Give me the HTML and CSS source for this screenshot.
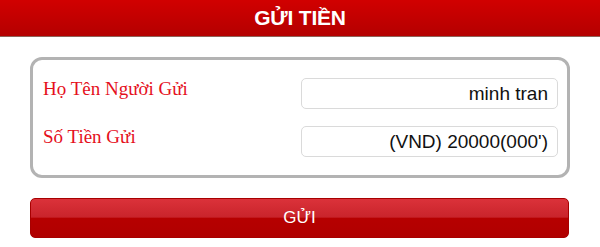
FILE: index.html
```html
<!DOCTYPE html>
<html lang="vi">
<head>
  <meta charset="UTF-8">
  <meta name="viewport" content="width=device-width, initial-scale=1.0">
  <title>Gửi Tiền</title>
  <link rel="stylesheet" href="styles.css">
</head>
<body>

  <div class="topbar">
    <h1>GỬI TIỀN</h1>
  </div>

  <form class="panel" id="sendForm">
    <div class="row">
      <label for="sender">Họ Tên Người Gửi</label>
      <input type="text" id="sender" value="minh tran">
    </div>
    <div class="row">
      <label for="amount">Số Tiền Gửi</label>
      <input type="text" id="amount" value="(VND) 20000(000')">
    </div>
  </form>

  <div class="actions">
    <button type="submit" form="sendForm" class="send-btn">GỬI</button>
  </div>

</body>
</html>
```

FILE: styles.css
```css
body {
  margin: 0;
  font-family: "Liberation Sans", Arial, sans-serif;
  background-color: #fff;
}
.topbar {
  height: 36px;
  display: flex;
  align-items: center;
  justify-content: center;
  background: linear-gradient(to bottom, #d10000, #b40000);
  border-bottom: 1px solid #8e6258;
}
.topbar h1 {
  margin: 0;
  color: #fff;
  font-size: 21px;
  font-weight: bold;
  letter-spacing: -0.2px;
}
.panel {
  margin: 20px 30px 0;
  padding: 18px 9px 18px 10px;
  border: 3px solid #b3b3b3;
  border-radius: 12px;
  display: flex;
  flex-direction: column;
  gap: 17px;
}
.row {
  display: flex;
  align-items: flex-start;
  justify-content: space-between;
}
.row label {
  font-family: "Liberation Serif", "Times New Roman", serif;
  font-size: 19px;
  color: #e5101c;
}
.row input {
  width: 257px;
  height: 31px;
  box-sizing: border-box;
  padding: 0 9px;
  border: 1px solid #dadada;
  border-radius: 5px;
  font-family: "Liberation Sans", Arial, sans-serif;
  font-size: 19px;
  color: #111;
  text-align: right;
  outline: none;
}
.actions {
  padding: 20px 31px 0 30px;
}
.send-btn {
  display: block;
  width: 100%;
  height: 40px;
  border: 1px solid #a70000;
  border-radius: 5px;
  background: linear-gradient(to bottom, #db323a 0%, #c9242b 48%, #b60000 50%, #b00000 100%);
  color: #fff;
  font-family: "Liberation Sans", Arial, sans-serif;
  font-size: 17px;
  cursor: pointer;
}
```
